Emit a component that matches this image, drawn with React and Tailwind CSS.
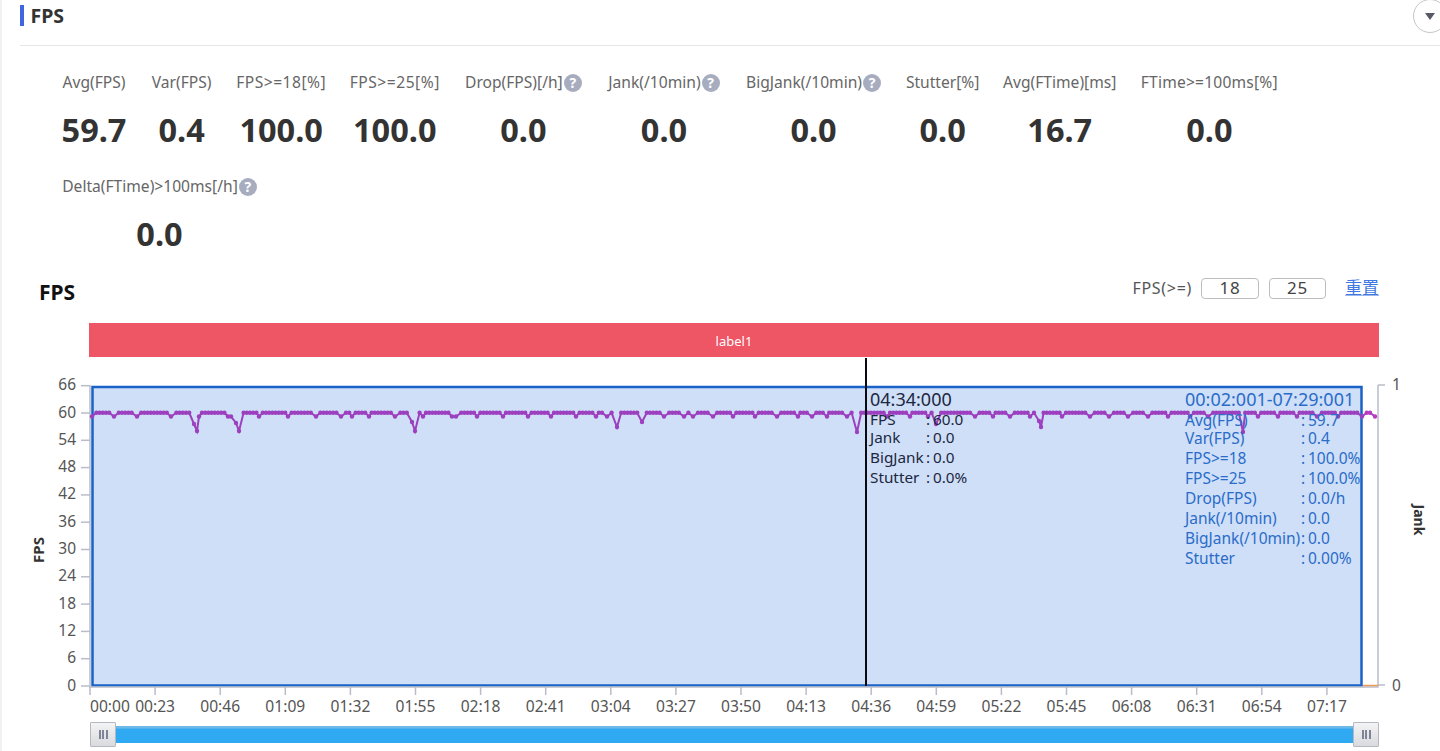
import React from 'react';

const metrics = [
  { label: 'Avg(FPS)', value: '59.7', w: 'w-[64px]' },
  { label: 'Var(FPS)', value: '0.4', w: 'w-[60px]' },
  { label: 'FPS>=18[%]', value: '100.0', w: 'w-[88px]', track: 'tracking-[0.5px]' },
  { label: 'FPS>=25[%]', value: '100.0', w: 'w-[88px]', track: 'tracking-[0.5px]' },
  { label: 'Drop(FPS)[/h]', value: '0.0', w: 'w-[118px]', help: true },
  { label: 'Jank(/10min)', value: '0.0', w: 'w-[112px]', help: true },
  { label: 'BigJank(/10min)', value: '0.0', w: 'w-[136px]', help: true },
  { label: 'Stutter[%]', value: '0.0', w: 'w-[71px]' },
  { label: 'Avg(FTime)[ms]', value: '16.7', w: 'w-[112px]' },
  { label: 'FTime>=100ms[%]', value: '0.0', w: 'w-[136px]', track: 'tracking-[0.2px]' },
  { label: 'Delta(FTime)>100ms[/h]', value: '0.0', w: 'w-[195px]', help: true },
];

const yTicks = [66, 60, 54, 48, 42, 36, 30, 24, 18, 12, 6, 0];
const xLabels = ['00:00', '00:23', '00:46', '01:09', '01:32', '01:55', '02:18', '02:41', '03:04', '03:27', '03:50', '04:13', '04:36', '04:59', '05:22', '05:45', '06:08', '06:31', '06:54', '07:17'];

const smallDips = [92, 114, 137, 171, 199, 228, 231, 259, 288, 316, 341, 352, 369, 395, 423, 452, 456, 477, 503, 528, 551, 576, 596, 607, 664, 684, 693, 713, 733, 755, 777, 798, 812, 827, 847, 887, 910, 928, 975, 993, 1010, 1030, 1062, 1090, 1109, 1128, 1148, 1168, 1190, 1208, 1258, 1278, 1297, 1317, 1338, 1362, 1375];
const bigDips = [[194, 424], [197, 431], [236, 423], [239, 431], [412, 422], [415, 431], [617, 427], [642, 422], [857, 432], [936, 424], [1039, 421], [1041, 427], [1243, 432]];

const dipMap = new Map(smallDips.map((x) => [x, 416.5]));
bigDips.forEach(([x, y]) => dipMap.set(x, y));

const points = [];
for (let x = 90; x <= 1378; x += 3.2) {
  if (![...dipMap.keys()].some((d) => Math.abs(d - x) < 2.2)) points.push([x, 412.8]);
}
dipMap.forEach((y, x) => points.push([x, y]));
points.sort((a, b) => a[0] - b[0]);
const linePath = points.map(([x, y]) => `${x},${y}`).join(' ');

const yOf = (v) => 686 - v * 4.55;

function HelpIcon() {
  return (
    <span className="w-[18px] h-[18px] rounded-full bg-[#a7adbf] text-white text-[14px] font-bold leading-[18px] text-center shrink-0">?</span>
  );
}

function Metric({ item }) {
  return (
    <div className={`${item.w} flex flex-col items-center`}>
      <div className={`mt-px h-6 flex items-center gap-px text-[15.6px] text-[#666] whitespace-nowrap ${item.track || ''}`}>
        {item.label}
        {item.help && <HelpIcon />}
      </div>
      <div className="mt-[15px] h-10 flex items-center text-[32.5px] font-bold text-[#333]">{item.value}</div>
    </div>
  );
}

function ChartSvg() {
  const leftRows = [['FPS', '60.0', 425], ['Jank', '0.0', 443], ['BigJank', '0.0', 463], ['Stutter', '0.0%', 483]];
  const rightRows = [['Avg(FPS)', '59.7', 425], ['Var(FPS)', '0.4', 443], ['FPS>=18', '100.0%', 463], ['FPS>=25', '100.0%', 483], ['Drop(FPS)', '0.0/h', 503], ['Jank(/10min)', '0.0', 523], ['BigJank(/10min)', '0.0', 543], ['Stutter', '0.00%', 563]];

  return (
    <svg className="block" width="1440" height="365" viewBox="0 357 1440 365" fontFamily="'Noto Sans', sans-serif">
      {/* selection */}
      <rect x="92.5" y="387" width="1269" height="298.5" fill="#cfdff8" stroke="#1a62c8" strokeWidth="2.5" />

      {/* axes */}
      <path d="M90 385V687H1378V385" fill="none" stroke="#b9bdc9" strokeWidth="1.5" />
      {yTicks.map((v) => (
        <g key={v}>
          <line x1="81" x2="90" y1={yOf(v)} y2={yOf(v)} stroke="#b9bdc9" strokeWidth="1.5" />
          <text x="76" y={yOf(v) + 4.5} textAnchor="end" fontSize="15.5" fill="#555">{v}</text>
        </g>
      ))}
      {xLabels.map((t, i) => {
        const x = 90 + i * 65.1;
        return (
          <g key={t}>
            <line x1={x} x2={x} y1="687" y2="695" stroke="#b9bdc9" strokeWidth="1.5" />
            <text x={i === 0 ? 90 : x} y="712" textAnchor={i === 0 ? 'start' : 'middle'} fontSize="15.6" fill="#555">{t}</text>
          </g>
        );
      })}
      <path d="M1378 385H1385M1378 685H1385" stroke="#b9bdc9" strokeWidth="1.5" />
      <line x1="1363" x2="1378" y1="685.5" y2="685.5" stroke="#ee9a55" strokeWidth="1.5" />
      <text x="1392" y="389.5" fontSize="15.5" fill="#555">1</text>
      <text x="1392" y="690.5" fontSize="15.5" fill="#555">0</text>
      <text transform="translate(44 550) rotate(-90)" textAnchor="middle" fontSize="15" fontWeight="700" fill="#333">FPS</text>
      <text transform="translate(1414 520) rotate(90)" textAnchor="middle" fontSize="14" fontWeight="700" fill="#333">Jank</text>

      {/* fps line */}
      <polyline points={linePath} fill="none" stroke="#9c40bf" strokeWidth="2" />
      {points.map(([x, y]) => (
        <circle key={x} cx={x} cy={y} r="2.2" fill={x > 1362 ? '#b93cc0' : '#9c40bf'} />
      ))}

      {/* cursor */}
      <line x1="866" x2="866" y1="358" y2="686" stroke="#0a0a12" strokeWidth="2" />
      <text x="870" y="405.5" fontSize="18" fill="#1c2740">04:34:000</text>
      {leftRows.map(([k, v, y]) => (
        <g key={k} fontSize="15.3" fill="#1c2740">
          <text x="870" y={y}>{k}</text>
          <text x="926" y={y}>:</text>
          <text x="933" y={y}>{v}</text>
        </g>
      ))}

      {/* range summary */}
      <text x="1185" y="405.5" fontSize="18" fill="#2a6cc8">00:02:001-07:29:001</text>
      {rightRows.map(([k, v, y]) => (
        <g key={k} fontSize="15.5" fill="#2a6cc8">
          <text x="1185" y={y + 0.5}>{k}</text>
          <text x="1301" y={y + 0.5}>:</text>
          <text x="1308" y={y + 0.5}>{v}</text>
        </g>
      ))}
    </svg>
  );
}

function SliderHandle() {
  return (
    <div className="w-[26px] h-[25px] shrink-0 rounded-[1px] border border-[#b5b8bf] bg-gradient-to-b from-[#f4f4f6] to-[#d9dade] flex items-center justify-center gap-[1.5px]">
      <span className="w-[2px] h-[9px] bg-[#7f8596]" />
      <span className="w-[2px] h-[9px] bg-[#7f8596]" />
      <span className="w-[2px] h-[9px] bg-[#7f8596]" />
    </div>
  );
}

export default function App() {
  return (
    <div className="w-[1440px] h-[751px] overflow-hidden bg-white border-l-2 border-[#f1f1f1] font-['Noto_Sans','Noto_Sans_CJK_SC',sans-serif]">
      <div className="-ml-0.5">
        {/* Section header */}
        <div className="ml-5 h-[46px] border-b border-[#e6e6e6] flex items-start justify-between">
          <div className="flex items-center gap-2 mt-[5px]">
            <span className="w-[3.5px] h-[21px] bg-[#3f66e0]" />
            <h2 className="text-[19.5px] leading-[21px] font-bold text-[#333] -ml-px">FPS</h2>
          </div>
          <button className="-mr-[7px] -mt-px w-[34px] h-[34px] rounded-full border border-[#c4c6cc] flex items-center justify-center">
            <span className="w-0 h-0 border-x-[5px] border-x-transparent border-t-[7px] border-t-[#555a66]" />
          </button>
        </div>

        {/* Metrics */}
        <div className="pl-[62px] pr-[140px] pt-6 h-[230px] flex flex-wrap content-start gap-x-[25.6px] gap-y-[24px]">
          {metrics.map((m) => (
            <Metric key={m.label} item={m} />
          ))}
        </div>

        {/* Chart heading and thresholds */}
        <div className="pl-[39px] pr-[61px] h-[47px] flex items-start justify-between">
          <h3 className="mt-px text-[21px] leading-[30px] font-bold text-[#111]">FPS</h3>
          <div className="flex items-center h-[24px] text-[16px] tracking-[0.7px] text-[#555]">
            <span>FPS(&gt;=)</span>
            <input readOnly value="18" className="ml-[9px] w-[58px] h-[21px] border border-[#bdbdbd] rounded-sm text-center text-[17px] text-[#444]" />
            <input readOnly value="25" className="ml-[10px] w-[57px] h-[21px] border border-[#bdbdbd] rounded-sm text-center text-[17px] text-[#444]" />
            <a className="ml-[19px] text-[17px] tracking-normal text-[#3f78e0] underline decoration-[#9bb8ee] underline-offset-1">重置</a>
          </div>
        </div>

        {/* Label band */}
        <div className="ml-[89px] w-[1290px] h-[34px] pt-[3px] bg-[#ee5565] flex items-center justify-center text-[13px] text-white">label1</div>

        <ChartSvg />

        {/* Range slider */}
        <div className="ml-[90px] w-[1289px] flex items-center">
          <SliderHandle />
          <div className="flex-1 h-[17px] bg-gradient-to-b from-[#6db8e6] from-10% via-[#2ea9f2] via-20% to-[#2ea9f2]" />
          <SliderHandle />
        </div>
      </div>
    </div>
  );
}
